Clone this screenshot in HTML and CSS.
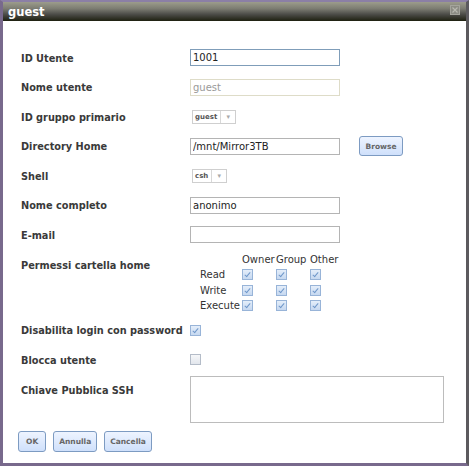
FILE: index.html
```html
<!DOCTYPE html>
<html lang="it">
<head>
    <meta charset="UTF-8">
    <title>guest</title>
    <link rel="stylesheet" href="styles.css">
</head>
<body>

    <div class="dialog">
        <div class="titlebar">
            <span class="title">guest</span>
            <span class="close" title="Chiudi">
                <svg width="10" height="10" viewBox="0 0 10 10">
                    <rect x="0.5" y="0.5" width="9" height="9" fill="#8c8c84" stroke="#a4a49c"/>
                    <path d="M2.5 2.5 L7.5 7.5 M7.5 2.5 L2.5 7.5" stroke="#b8b8b0" stroke-width="1.2"/>
                </svg>
            </span>
        </div>

        <div class="content">
            <div class="row">
                <label class="label">ID Utente</label>
                <input class="field focused" type="text" value="1001">
            </div>

            <div class="row">
                <label class="label">Nome utente</label>
                <input class="field" type="text" value="guest" disabled>
            </div>

            <div class="row">
                <label class="label">ID gruppo primario</label>
                <div class="combo"><span class="combo-text">guest</span><span class="combo-arrow">&#9662;</span></div>
            </div>

            <div class="row">
                <label class="label">Directory Home</label>
                <input class="field" type="text" value="/mnt/Mirror3TB">
                <button class="btn browse">Browse</button>
            </div>

            <div class="row">
                <label class="label">Shell</label>
                <div class="combo"><span class="combo-text">csh</span><span class="combo-arrow">&#9662;</span></div>
            </div>

            <div class="row">
                <label class="label">Nome completo</label>
                <input class="field" type="text" value="anonimo">
            </div>

            <div class="row">
                <label class="label">E-mail</label>
                <input class="field" type="text" value="">
            </div>

            <!-- permessi: griglia owner/group/other -->
            <div class="row row-top perms-row">
                <label class="label">Permessi cartella home</label>
                <div class="perms">
                    <span></span><span>Owner</span><span>Group</span><span>Other</span>
                    <span>Read</span><span class="cb checked"></span><span class="cb checked"></span><span class="cb checked"></span>
                    <span>Write</span><span class="cb checked"></span><span class="cb checked"></span><span class="cb checked"></span>
                    <span>Execute</span><span class="cb checked"></span><span class="cb checked"></span><span class="cb checked"></span>
                </div>
            </div>

            <div class="row">
                <label class="label">Disabilita login con password</label>
                <span class="cb checked"></span>
            </div>

            <div class="row">
                <label class="label">Blocca utente</label>
                <span class="cb"></span>
            </div>

            <div class="row row-top">
                <label class="label">Chiave Pubblica SSH</label>
                <textarea class="ssh"></textarea>
            </div>

            <div class="actions">
                <button class="btn">OK</button>
                <button class="btn">Annulla</button>
                <button class="btn">Cancella</button>
            </div>
        </div>
    </div>

</body>
</html>
```

FILE: styles.css
```css
body {
    margin: 0;
    padding: 0;
    background: #fff;
    font-family: "DejaVu Sans", Verdana, sans-serif;
}

.dialog {
    width: 469px;
    height: 466px;
    box-sizing: border-box;
    border: 3px solid #78698c;
    border-top: 2px solid #8b7fa6;
    border-right-color: #5c5a5e;
    background: #fff;
}

.titlebar {
    height: 19px;
    display: flex;
    align-items: center;
    justify-content: space-between;
    padding: 0 6px 0 5px;
    background: linear-gradient(#9c9c8c, #7c7c72 35%, #4c4c48 65%, #1e2010);
}

.title {
    color: #fff;
    font-weight: bold;
    font-size: 11.5px;
}

.close {
    display: flex;
    margin-top: -4px;
}

.content {
    padding: 22px 15px 0 15px;
}

.row {
    display: flex;
    align-items: center;
    height: 29.5px;
}

.row-top {
    align-items: flex-start;
    height: auto;
}

.perms-row {
    height: 66px;
}

.label {
    width: 169px;
    flex-shrink: 0;
    padding: 1px 0 0 3px;
    line-height: 29.5px;
    font-size: 9.75px;
    font-weight: bold;
    color: #3a3a3a;
}

.field {
    width: 150px;
    height: 17px;
    box-sizing: border-box;
    margin: 0;
    padding: 0 2px;
    border: 1px solid #b4b4b4;
    font-family: "DejaVu Sans", Verdana, sans-serif;
    font-size: 10px;
    color: #222;
    background: #fff;
    outline: none;
}

.field.focused {
    border-color: #7f9db9;
}

.field:disabled {
    border-color: #dedcc8;
    color: #9a9a9a;
    background: #fff;
}

.combo {
    display: flex;
    align-items: center;
    height: 14px;
    margin-left: 2px;
    box-sizing: border-box;
    border: 1px solid #cfcfcf;
    font-size: 7px;
    font-weight: bold;
    color: #555;
}

.combo-text {
    padding: 0 3px 0 2px;
    border-right: 1px solid #d8d8d8;
    line-height: 12px;
}

.combo-arrow {
    width: 14px;
    text-align: center;
    font-size: 7px;
    color: #aaa;
    font-weight: normal;
}

.btn {
    height: 21px;
    padding: 0 5px;
    border: 1px solid #7d9bc2;
    border-radius: 3px;
    background: linear-gradient(#eef4ff, #cfe0fb);
    font-family: "DejaVu Sans", Verdana, sans-serif;
    font-size: 7.5px;
    font-weight: bold;
    color: #666;
    cursor: pointer;
}

.browse {
    width: 44px;
    height: 20px;
    padding: 0;
    margin-left: 19px;
}

.perms {
    display: grid;
    grid-template-columns: 42px 34px 34px 34px;
    grid-auto-rows: 15.5px;
    align-items: center;
    margin: 2px 0 0 10px;
    font-size: 10px;
    color: #333;
}

.cb {
    display: inline-block;
    width: 11px;
    height: 11px;
    box-sizing: border-box;
    border: 1px solid #b4bcc8;
    background: linear-gradient(#f6f7f9, #e2e6ec);
}

.cb.checked {
    border-color: #98b4d8;
    background: linear-gradient(#e4eefa, #c6d8f0) ;
    position: relative;
}

.cb.checked::after {
    content: "";
    position: absolute;
    left: 3px;
    top: 1px;
    width: 2px;
    height: 5px;
    border: solid #6f97c9;
    border-width: 0 1.5px 1.5px 0;
    transform: rotate(40deg);
}

.ssh {
    width: 254px;
    height: 47px;
    box-sizing: border-box;
    margin: 1px 0 0 0;
    border: 1px solid #bcbcbc;
    resize: none;
    font-family: "DejaVu Sans", Verdana, sans-serif;
}

.actions {
    display: flex;
    gap: 7px;
    margin-top: 8px;
}

.actions .btn:first-child {
    padding: 0 7px;
}
```
